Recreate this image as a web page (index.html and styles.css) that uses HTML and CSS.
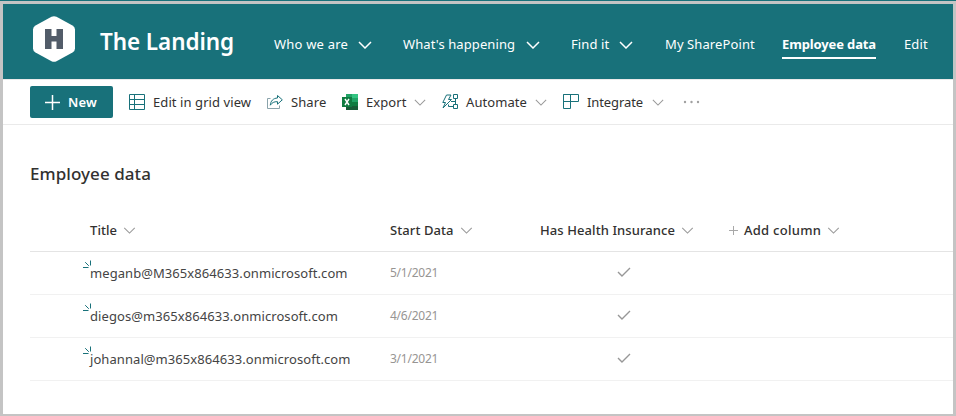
FILE: index.html
```
<!DOCTYPE html>
<html lang="en">
<head>
<meta charset="utf-8">
<title>Employee data</title>
<link rel="stylesheet" href="styles.css">
</head>
<body>
<svg class="defs" aria-hidden="true">
  <symbol id="chev" viewBox="0 0 14 8"><path d="M1 1 L7 7 L13 1"/></symbol>
  <symbol id="check" viewBox="0 0 14 10"><path d="M1 5 L5 9 L13 1"/></symbol>
  <symbol id="spark" viewBox="0 0 9 9"><path d="M7.500 .5V5.500M2.200 2.200L5.800 5.800M0 7.500H5.500"/></symbol>
</svg>
<div class="page">
  <header class="site-header">
    <svg class="logo" viewBox="0 0 42 46"><path d="M18.500 .8Q21-.3 23.500 .8L39.500 9.500Q42 11 42 13.500V32.500Q42 35 39.500 36.500L23.500 45.300Q21 46.400 18.500 45.300L2.500 36.500Q0 35 0 32.500V13.500Q0 11 2.500 9.500Z" fill="#fff"/><path d="M12 13h6.500v7h5v-7h6.500v20h-6.500v-7.500h-5v7.500h-6.500z" fill="#525c69"/></svg>
    <span class="site-title"><span class="t">The Landing</span></span>
    <nav class="nav">
      <a class="n1"><span class="t">Who we are</span><svg class="nchev"><use href="#chev"/></svg></a>
      <a class="n2"><span class="t">What's happening</span><svg class="nchev"><use href="#chev"/></svg></a>
      <a class="n3"><span class="t">Find it</span><svg class="nchev"><use href="#chev"/></svg></a>
      <a class="n4"><span class="t">My SharePoint</span></a>
      <a class="n5 active"><span class="t">Employee data</span></a>
      <a class="n6"><span class="t">Edit</span></a>
    </nav>
  </header>
  <div class="toolbar">
    <button class="new"><svg class="plus" viewBox="0 0 15 15"><path d="M7.500 0V15M0 7.500H15"/></svg><span class="t">New</span></button>
    <div class="cmd c1"><svg class="ico" viewBox="0 0 16 16"><path d="M.5 .5H15.500V15.500H.5ZM5.500 .5V15.500M.5 5.500H15.500M.5 10.500H15.500"/></svg><span class="t">Edit in grid view</span></div>
    <div class="cmd c2"><svg class="ico" viewBox="0 0 16 16"><path class="soft" d="M3.500 4.500H.5V14.500H12.500V11.500"/><path d="M10.500 1.500L15.300 5.800L10.500 10.200V7.700C7 7.500 5 8.700 3.300 11.200C3.600 7 6.200 4.200 10.500 4Z"/></svg><span class="t">Share</span></div>
    <div class="cmd c3"><svg class="ico excel" viewBox="0 0 16 16"><path fill="#21a366" d="M4 0H16V16H4Z"/><path fill="#33c481" d="M10 0H16V4H10Z"/><path fill="#107c41" d="M4 4H10V8H4ZM10 8H16V12H10Z"/><path fill="#185c37" d="M4 8H10V12H16V16H4Z"/><path fill="#107c41" d="M0 3H10V13H0Z"/><path class="x" d="M3 5L7 11M7 5L3 11"/></svg><span class="t">Export</span><svg class="cchev"><use href="#chev"/></svg></div>
    <div class="cmd c4"><svg class="ico" viewBox="0 0 16 16"><path d="M4.500 1H9L6.500 5.500H9.500L1 14L3.500 8.500H.8ZM11.500 .5H15.500V4.500H11.500ZM11.500 10.500H15.500V14.500H11.500ZM13.500 4.500V10.500M11.500 12.500H6.500V10.500M9 7.500H13.500"/></svg><span class="t">Automate</span><svg class="cchev"><use href="#chev"/></svg></div>
    <div class="cmd c5"><svg class="ico" viewBox="0 0 16 16"><path d="M.5 .5H15.500V7.500H.5ZM.5 .5V14.500H7.500V.5"/></svg><span class="t">Integrate</span><svg class="cchev"><use href="#chev"/></svg></div>
    <svg class="dots" viewBox="0 0 16 4"><circle cx="1.500" cy="2" r="1.200"/><circle cx="8" cy="2" r="1.200"/><circle cx="14.500" cy="2" r="1.200"/></svg>
  </div>
  <main class="content">
    <h1><span class="t">Employee data</span></h1>
    <div class="row head">
      <div class="name"><span class="t">Title</span><svg class="hchev"><use href="#chev"/></svg></div>
      <div class="date"><span class="t">Start Data</span><svg class="hchev"><use href="#chev"/></svg></div>
      <div class="ins"><span class="t">Has Health Insurance</span><svg class="hchev"><use href="#chev"/></svg></div>
      <div class="add"><svg class="addplus" viewBox="0 0 9 9"><path d="M4.500 0V9M0 4.500H9"/></svg><span class="t">Add column</span><svg class="hchev"><use href="#chev"/></svg></div>
    </div>
    <div class="row">
      <div class="name"><svg class="spark"><use href="#spark"/></svg><span class="t">meganb@M365x864633.onmicrosoft.com</span></div>
      <div class="date"><span class="t">5/1/2021</span></div>
      <div class="ins"><svg class="check"><use href="#check"/></svg></div>
    </div>
    <div class="row">
      <div class="name"><svg class="spark"><use href="#spark"/></svg><span class="t">diegos@m365x864633.onmicrosoft.com</span></div>
      <div class="date"><span class="t">4/6/2021</span></div>
      <div class="ins"><svg class="check"><use href="#check"/></svg></div>
    </div>
    <div class="row">
      <div class="name"><svg class="spark"><use href="#spark"/></svg><span class="t">johannal@m365x864633.onmicrosoft.com</span></div>
      <div class="date"><span class="t">3/1/2021</span></div>
      <div class="ins"><svg class="check"><use href="#check"/></svg></div>
    </div>
  </main>
</div>
</body>
</html>
```
FILE: styles.css
```
* { box-sizing: border-box; }
body { margin: 0; font-family: "Noto Sans", "Open Sans", sans-serif; font-size: 13px; color: #323130; background: #c4c4c4; border-top: 1px solid #18717a; }
.defs { position: absolute; width: 0; height: 0; }
svg { display: block; flex: none; fill: none; overflow: visible; }
.page { margin: 3px 3px 2px; height: 410px; background: #fff; overflow: hidden; }
.t { white-space: nowrap; flex: none; }
.site-header { height: 75px; background: #18717a; color: #fff; display: flex; align-items: center; padding-left: 30px; }
.logo { width: 42px; height: 46px; margin-bottom: 5px; }
.site-title { width: 174px; margin-left: 25px; font-size: 22.5px; font-weight: 600; line-height: 30px; letter-spacing: -.08px; }
.nav { display: flex; height: 30px; margin-top: 4px; letter-spacing: .1px; }
.nav a { display: flex; align-items: center; justify-content: space-between; height: 30px; position: relative; }
.nchev { width: 14px; height: 8px; stroke: #fff; stroke-width: 1.500; margin-top: 3px; }
.n1 { width: 98px; margin-right: 31px; }
.n1 .t { letter-spacing: .2px; }
.n2 { width: 137px; margin-right: 31px; }
.n3 { width: 62px; margin-right: 32px; }
.n4 { width: 90px; margin-right: 27px; }
.n5 { width: 94px; margin-right: 28px; font-weight: 700; letter-spacing: -.13px; }
.n5::after { content: ""; position: absolute; left: 0; right: 0; bottom: 0; height: 2px; background: #fff; }
.toolbar { height: 46px; border-top: 1px solid #eaeaea; border-bottom: 1px solid #eaeaea; display: flex; align-items: center; padding-left: 27px; }
.new { width: 83px; height: 32px; border: 0; border-radius: 2px; background: #18717a; color: #fff; font: 600 13px "Noto Sans", sans-serif; letter-spacing: .2px; display: flex; align-items: center; gap: 8px; padding: 0 0 0 15px; margin-right: 16px; }
.plus { width: 15px; height: 15px; stroke: #fff; stroke-width: 1.500; }
.cmd { display: flex; align-items: center; height: 30px; }
.cmd .t { margin-left: 8px; letter-spacing: .08px; }
.ico { width: 16px; height: 16px; stroke: #18717a; stroke-width: 1; }
.soft { stroke: #8aa3ab; }
.excel { stroke: none; }
.x { stroke: #fff; stroke-width: 1.400; }
.cchev { width: 12px; height: 7px; stroke: #999; stroke-width: 1.200; margin-left: auto; }
.c1 { width: 138px; }
.c2 { width: 75px; }
.c3 { width: 84px; margin-right: 16px; }
.c4 { width: 105px; margin-right: 16px; }
.c5 { width: 101px; margin-right: 19px; }
.c5 .t { letter-spacing: -.1px; }
.dots { width: 17px; height: 4px; fill: #a0a0a0; }
.content { padding-left: 27px; }
h1 { margin: 36px 0 0; font-size: 17px; font-weight: 500; line-height: 26px; letter-spacing: .06px; }
.row { height: 43px; display: flex; align-items: center; border-bottom: 1px solid #f1f1f1; padding-left: 60px; }
.head { margin-top: 22px; font-weight: 500; border-color: #e4e4e4; }
.head .t { letter-spacing: .08px; }
.head .add .t { letter-spacing: .27px; }
.row > div { display: flex; align-items: center; position: relative; height: 100%; }
.name { width: 300px; }
.row:not(.head) .name { letter-spacing: .07px; color: #444; }
.date { width: 150px; }
.ins { width: 188px; }
.row:not(.head) .date { font-size: 12px; letter-spacing: -.25px; color: #979593; padding-bottom: 2px; }
.row:not(.head) .ins { padding-bottom: 3px; }
.hchev { width: 13px; height: 7px; stroke: #999; stroke-width: 1.200; margin-left: 6px; }
.addplus { width: 9px; height: 9px; stroke: #a8a8a8; margin: 0 6px 0 1px; }
.spark { position: absolute; width: 9px; height: 9px; left: -7px; top: 8px; stroke: #18717a; }
.check { width: 14px; height: 10px; margin-left: 77px; stroke: #979797; stroke-width: 1.400; }
```
